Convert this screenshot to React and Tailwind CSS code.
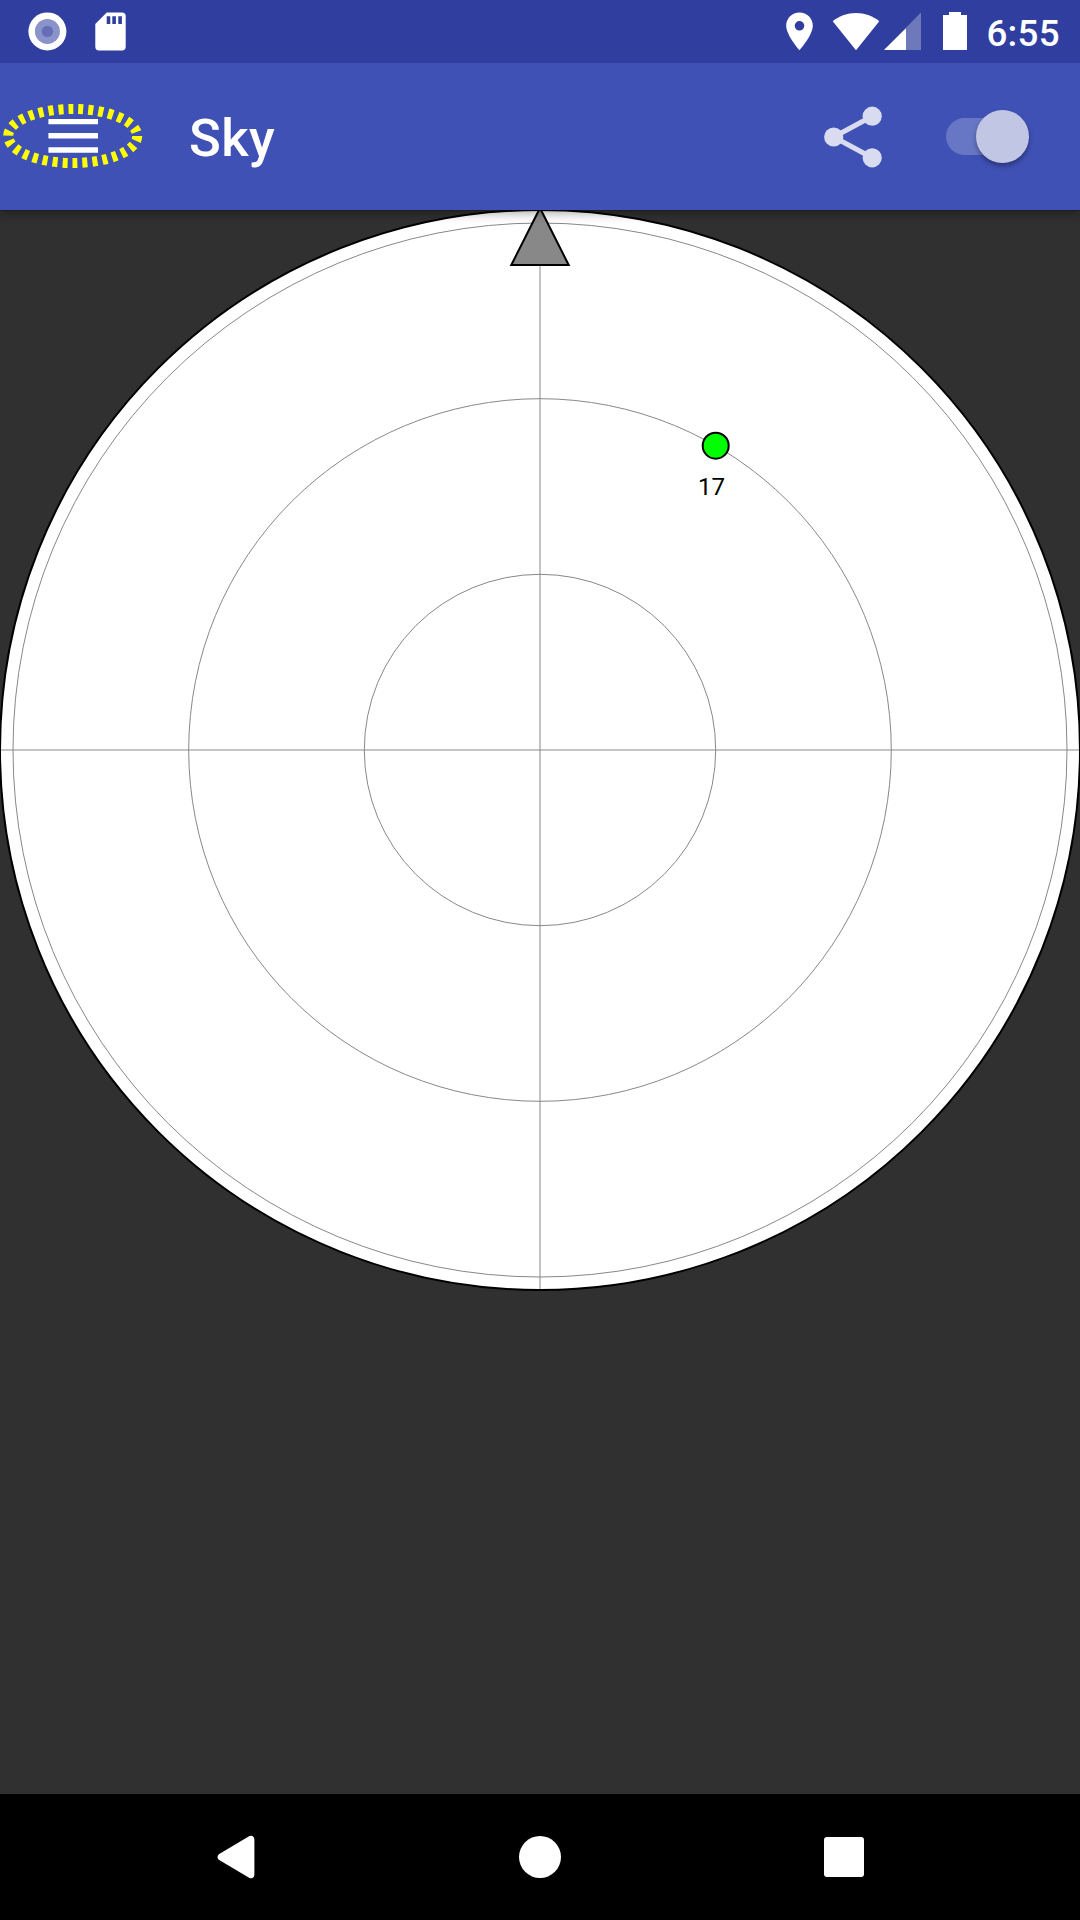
function StatusBar() {
  return (
    <div className="relative z-20 flex h-[63px] shrink-0 items-start justify-between bg-[#303f9f] pl-7 pr-5 text-white">
      <div className="flex gap-[29px] pt-3">
        <svg width="38" height="39" viewBox="0 0 38 39" className="overflow-visible">
          <circle cx="19.4" cy="19.4" r="19" fill="#fff" />
          <circle cx="19.4" cy="19.4" r="12.5" fill="#8b93cb" />
          <circle cx="19.4" cy="19.4" r="5.7" fill="#656fb8" />
        </svg>
        <svg width="32" height="39" viewBox="0 0 32 39">
          <path
            fillRule="evenodd"
            fill="#fff"
            d="M11.7.4H27a3.7 3.7 0 0 1 3.7 3.7v30.6a3.7 3.7 0 0 1-3.7 3.7H4A3.700 3.700 0 0 1 .3 34.700V12zM11.700 4.300v7.800h3.600V4.300zM17.300 4.300v7.800h3.600V4.300zM23.300 4.300v7.800h3.600V4.300z"
          />
        </svg>
      </div>
      <div className="flex">
        <svg className="mt-3" width="201" height="40" viewBox="786 12 201 40" fill="#fff">
          <path
            fillRule="evenodd"
            d="M799.5 12.5c-7.4 0-13.3 5.9-13.3 13.2 0 9.5 13.3 24.5 13.3 24.5s13.3-15 13.3-24.5c0-7.3-5.9-13.2-13.3-13.2zm0 8.5a4.8 4.8 0 1 1 0 9.6 4.8 4.8 0 0 1 0-9.6z"
          />
          <path d="M856 50.300 832.700 21.200C839.500 15.800 847.500 13 856 13s16.500 2.800 23.300 8.200z" />
          <path opacity="0.3" d="M921 12.500V50H884z" />
          <path d="M906 28.200V50H884z" />
          <path d="M949 12h12v3h6v35h-24V15h6z" />
        </svg>
        <span className="-ml-[1px] mt-[12px] font-['Roboto'] text-[36.75px] font-medium leading-[44px] tracking-[0.3px]">6:55</span>
      </div>
    </div>
  );
}

function AppBar() {
  return (
    <header className="relative z-10 flex h-[147px] shrink-0 items-center bg-[#3f51b5] text-white shadow-[0_4px_9px_rgba(0,0,0,0.3),0_0_2px_rgba(0,0,0,0.5)]">
      <svg width="147" height="147" viewBox="0 63 147 147">
        <path fill="#fff" d="M48.400 118.900H98v5.400H48.400zM48.400 133.100H98v5.400H48.400zM48.400 147.300H98v5.400H48.400z" />
        <ellipse cx="72.700" cy="136" rx="64.500" ry="27" fill="none" stroke="#ff0" strokeWidth="10" strokeDasharray="5 5" />
      </svg>
      <h1 className="ml-[42px] mt-[3px] grow font-['Roboto'] text-[52.5px] font-medium leading-[62px] tracking-[0.4px]">Sky</h1>
      <svg width="62" height="64" viewBox="822 104 62 64" className="mr-[62px]">
        <g fill="#d9dcf0" stroke="#d9dcf0">
          <path fill="none" strokeWidth="5" d="M872.200 115.200 833.700 136l38.500 20.800" />
          <circle cx="872.200" cy="115.200" r="9.600" stroke="none" />
          <circle cx="833.700" cy="136" r="9.600" stroke="none" />
          <circle cx="872.200" cy="156.800" r="9.600" stroke="none" />
        </g>
      </svg>
      <div className="mr-[51px] flex h-[53px] w-[83px] items-center justify-end rounded-full">
        <div className="h-[37px] w-[56px] rounded-l-full bg-[#6877c5]" />
        <div className="-ml-[26px] h-[53px] w-[53px] shrink-0 rounded-full bg-[#c2c6e5] shadow-[0_3px_5px_rgba(0,0,0,0.35)]" />
      </div>
    </header>
  );
}

function SkyView() {
  return (
    <main className="grow bg-[#303030]">
      <svg className="block overflow-visible" width="1080" height="1080" viewBox="0 0 1080 1080">
        <circle cx="540" cy="540" r="540" fill="#fff" stroke="#000" strokeWidth="2" />
        <g fill="none" stroke="#888" strokeWidth="1">
          <path d="M540 1v1078M1 540h1078" />
          <circle cx="540" cy="540" r="527" />
          <circle cx="540" cy="540" r="351.300" />
          <circle cx="540" cy="540" r="175.700" />
        </g>
        <path d="M540-2 511.300 55h57.400z" fill="#888" stroke="#000" strokeWidth="2" />
        <circle cx="715.700" cy="235.700" r="13" fill="#0f0" stroke="#000" strokeWidth="2" />
        <text x="698" y="284.700" className="font-['Roboto'] text-[24px]" fill="#000">17</text>
      </svg>
    </main>
  );
}

function NavBar() {
  return (
    <nav className="flex h-[126px] shrink-0 items-center justify-between bg-black pl-[217px] pr-[216px]">
      <svg width="38" height="44" viewBox="0 0 38 44">
        <path
          fill="#fff"
          d="M1.800 19.200 32.500 1.100Q34 .3 35.500 1 37.400 2 37.400 4.500v35q0 2.500-1.900 3.500-1.500.700-3-.1L1.800 24.800Q-.8 22 1.800 19.200z"
        />
      </svg>
      <div className="ml-px h-[42px] w-[42px] rounded-full bg-white" />
      <div className="h-10 w-10 rounded-[3px] bg-white" />
    </nav>
  );
}

export default function App() {
  return (
    <div className="flex h-[1920px] w-[1080px] flex-col overflow-hidden font-['Roboto',sans-serif]">
      <StatusBar />
      <AppBar />
      <SkyView />
      <NavBar />
    </div>
  );
}
